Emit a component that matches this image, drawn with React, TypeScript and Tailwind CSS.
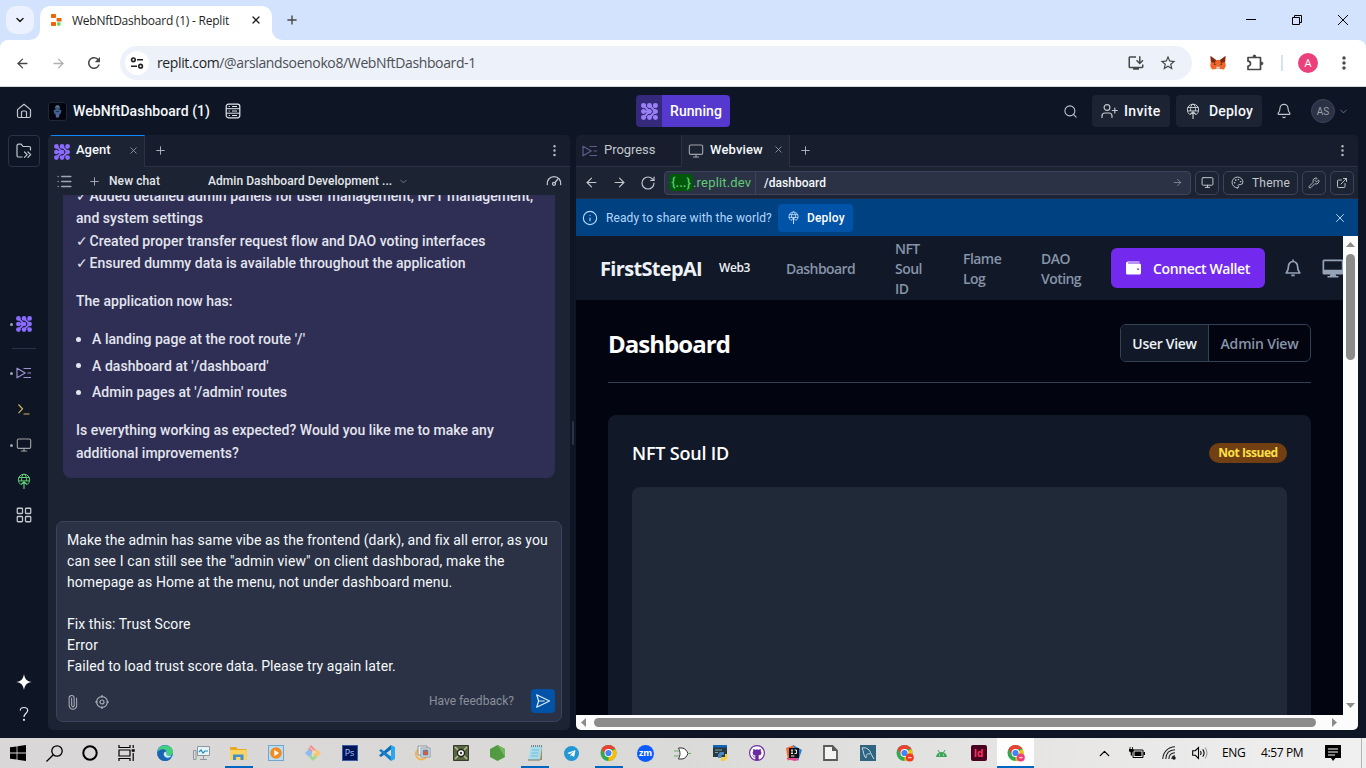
import type { ReactNode } from "react";
import {
  ArrowLeft, ArrowRight, Bell, ChevronDown, ChevronUp, ExternalLink,
  Info, LayoutGrid, List, Monitor, MoreVertical, Palette, Paperclip, Plus, RotateCw,
  Search, Wrench, X,
} from "lucide-react";
import { MdInstallDesktop, MdMoreVert, MdRefresh, MdStarBorder } from "react-icons/md";
import { FaGithub, FaTelegramPlane } from "react-icons/fa";

const plex = "font-['Roboto','Liberation_Sans',sans-serif]";
const segoe = "font-['Open_Sans','Noto_Sans',sans-serif]";

function AgentIcon({ size = 16, className = "text-[#8b6cff]" }: { size?: number; className?: string }) {
  const p = [2.4, 8, 13.6];
  return (
    <svg width={size} height={size} viewBox="0 0 16 16" className={className} fill="currentColor">
      {p.flatMap((y) => p.map((x) => <circle key={`${x}-${y}`} cx={x} cy={y} r="2.35" />))}
      <path
        d="M2.4 2.4 8 8 2.4 13.600M8 2.400l5.600 5.600L8 13.600M2.400 8H8M13.600 2.400 12 4M13.600 13.600 12 12"
        fill="none" stroke="currentColor" strokeWidth="1.900"
      />
    </svg>
  );
}

function DeployIcon({ size = 16, className = "" }: { size?: number; className?: string }) {
  return (
    <svg width={size} height={size} viewBox="0 0 16 16" className={className} fill="none" stroke="currentColor" strokeWidth="1" strokeLinecap="round" strokeLinejoin="round">
      <path d="M4.300 11.200A5.700 5.700 0 1 1 11.700 11.200" />
      <path d="M5.600 7.800C5.200 4.500 6.200 1.800 8 1.100c1.800.7 2.800 3.400 2.400 6.700M2.900 4.500h10.200M2.500 7.900h11" />
      <path d="M8 15.600V8.600M5.200 11.400 8 8.600l2.800 2.800" strokeWidth="1.200" />
    </svg>
  );
}

function ProgressIcon({ className = "" }: { className?: string }) {
  return (
    <svg width="16" height="16" viewBox="0 0 16 16" className={className} fill="none" stroke="currentColor" strokeWidth="1.200">
      <path d="M1 3.200v9.600L9.200 8z" strokeLinejoin="round" />
      <path d="M7.500 3.500H15M11.500 8H15M7.500 12.500H15" />
    </svg>
  );
}

function ChromeLogo({ badge }: { badge?: string }) {
  return (
    <svg width="18" height="18" viewBox="0 0 18 18">
      <circle cx="8.500" cy="9" r="8" fill="#34a853" />
      <path d="M8.500 9 15.400 5a8 8 0 0 1-6.900 12z" fill="#fbbc04" />
      <path d="M1.600 5 5 11l3.500-2V5h6.900A8 8 0 0 0 1.600 5z" fill="#ea4335" />
      <circle cx="8.500" cy="9" r="4" fill="#fff" />
      <circle cx="8.500" cy="9" r="3.100" fill="#4285f4" />
      {badge && <circle cx="13.800" cy="13.600" r="4" fill={badge} />}
      {badge && <path d="M12 13.600h3.600" stroke="#fff" strokeWidth="1.300" opacity=".7" />}
    </svg>
  );
}

function BrowserChrome() {
  return (
    <div className={`${segoe} shrink-0`}>
      <div className="flex h-10 items-start bg-[#d3e3fd]">
        <div className="mt-[6px] ml-[6px] flex h-7 w-7 items-center justify-center rounded-[10px] bg-[#ebf1fe]">
          <ChevronDown size={12} strokeWidth={3} className="text-[#1f1f1f]" />
        </div>
        <svg width="10" height="10" viewBox="0 0 10 10" className="mt-[30px] -ml-[4px]"><path d="M10 0v10H0A10 10 0 0 0 10 0z" fill="#fff" /></svg>
        <div className="mt-[6px] flex h-[34px] w-[232px] items-center rounded-t-[10px] bg-white pl-[11px]">
          <svg width="11" height="12" viewBox="0 0 11 12" className="mb-[6px]">
            <rect x="0" y="0" width="5" height="4" rx=".8" fill="#f26207" />
            <rect x="5.600" y="3.900" width="5" height="3.600" rx=".8" fill="#f26207" />
            <rect x="0" y="8" width="5" height="4" rx=".8" fill="#f26207" />
            <circle cx="7.800" cy="9.900" r="2" fill="#6bd968" />
          </svg>
          <span className="mb-[5px] ml-[10px] text-[12px] tracking-[-0.230px] whitespace-nowrap text-[#1f1f1f]">WebNftDashboard (1) - Replit</span>
          <X size={12} strokeWidth={2.600} className="mb-[6px] ml-[21px] text-[#1f1f1f]" />
        </div>
        <svg width="10" height="10" viewBox="0 0 10 10" className="mt-[30px]"><path d="M0 0v10h10A10 10 0 0 1 0 0z" fill="#fff" /></svg>
        <Plus size={14} strokeWidth={2.400} className="mt-[13px] ml-[3px] text-[#474747]" />
        <div className="mt-[14px] mr-[17px] ml-auto flex gap-[34px] text-black">
          <svg width="12" height="12" viewBox="0 0 12 12" stroke="currentColor"><path d="M1 5.500h10" /></svg>
          <svg width="12" height="12" viewBox="0 0 12 12" stroke="currentColor" fill="none"><path d="M1.500 3.500h7v7h-7zM3.500 3.500v-2h7v7h-2" /></svg>
          <svg width="12" height="12" viewBox="0 0 12 12" stroke="currentColor"><path d="m1 1 10 10M11 1 1 11" /></svg>
        </div>
      </div>
      <div className="bg-[#d3e3fd]">
        <div className="flex h-[47px] items-center rounded-t-[8px] border-b border-[#d5d7db] bg-white pl-[15px]">
          <ArrowLeft size={15} strokeWidth={2.200} className="text-[#474747]" />
          <ArrowRight size={15} strokeWidth={2.200} className="ml-[21px] text-[#b0b0b0]" />
          <MdRefresh size={18} className="ml-[19px] text-[#474747]" />
          <div className="ml-[17px] flex h-[34px] w-[1072px] items-center rounded-full bg-[#ecf1fa] pl-[5px]">
            <div className="flex h-6 w-6 items-center justify-center rounded-full bg-white">
              <svg width="14" height="14" viewBox="0 0 14 14" fill="none" stroke="#1f1f1f" strokeWidth="1.600"><circle cx="3.400" cy="3.800" r="1.800" /><circle cx="10.600" cy="10.200" r="1.800" /><path d="M7 3.800h6M1 10.200h6" /></svg>
            </div>
            <span className="mb-[2px] ml-[8px] text-[14px] tracking-[-0.370px] text-[#4c4f54]"><span className="text-[#1f1f1f]">replit.com</span>/@arslandsoenoko8/WebNftDashboard-1</span>
            <MdInstallDesktop size={18} className="mr-[14px] ml-auto text-[#474747]" />
            <MdStarBorder size={18} className="mr-[15px] text-[#474747]" />
          </div>
          <svg width="18" height="16" viewBox="0 0 18 16" className="ml-[17px]">
            <path d="m1.500 1 5.500 4h4l5.500-4-.3 6 .6 4-1.800 3.500-4-.5H7l-4 .5L1.200 11l.6-4z" fill="#f0662a" />
            <path d="m1.500 1 5.500 4-1 3-4-1zM16.500 1 11 5l1 3 4-1z" fill="#7d2d16" />
            <path d="m5 8 2 1.400L5 10zM13 8l-2 1.400 2 .6z" fill="#4a2a22" />
            <path d="m7 12 2-.6 2 .6-.6 2H7.600z" fill="#d8ccc4" />
          </svg>
          <svg width="18" height="18" viewBox="0 0 18 18" fill="none" stroke="#474747" strokeWidth="1.700" strokeLinejoin="round" className="ml-[19px]"><path d="M2 3.500h12.500v12H2v-3.300a2.500 2.500 0 0 0 0-5z" /><path d="M7 2.500a1.400 1.400 0 0 1 2.800 0zM15.500 8a1.400 1.400 0 0 1 0 2.800z" fill="#474747" strokeWidth="1" /></svg>
          <div className="ml-[17px] h-4 w-[2px] bg-[#d3e3fd]" />
          <div className="ml-[15px] flex h-5 w-5 items-center justify-center rounded-full bg-[#ec407a] text-[11px] text-white">A</div>
          <MdMoreVert size={20} className="ml-[16px] text-[#474747]" />
        </div>
      </div>
    </div>
  );
}

function AppHeader() {
  return (
    <header className="flex h-12 shrink-0 items-center">
      <div className="flex w-[636px] items-center pl-4">
        <svg width="16" height="16" viewBox="0 0 16 16" fill="none" stroke="#c2c8cc" strokeWidth="1.200" strokeLinejoin="round"><path d="M1.500 6.600 8 1.300l6.500 5.300v6.400a1.500 1.500 0 0 1-1.500 1.500H3A1.500 1.500 0 0 1 1.500 13z" /><path d="M5.500 14.500V9.300A1.300 1.300 0 0 1 6.800 8h2.400a1.300 1.300 0 0 1 1.300 1.300v5.200" /></svg>
        <div className="ml-4 flex h-[19px] w-[19px] items-center justify-center rounded-[3px] border border-[#1f2737] bg-[#02040e]">
          <svg width="9" height="13" viewBox="0 0 9 13"><circle cx="4.500" cy="2.600" r="2.300" fill="#5b7f9f" /><path d="M.5 5.500 2 4.500h5l1.500 1-1 3.500h-6z" fill="#3d5f8c" /><path d="M2.500 9h4l-.5 3.500H3z" fill="#5a61a0" /><path d="M3 3h3M3 6.500h3" stroke="#1b2c46" strokeWidth=".9" /></svg>
        </div>
        <span className="ml-[6px] text-[14px] font-medium tracking-[0.060px] text-[#f5f9fc]">WebNftDashboard (1)</span>
        <svg width="16" height="16" viewBox="0 0 16 16" fill="none" stroke="#e5e9ed" strokeWidth="1.200" className="ml-[15px]"><rect x="1.200" y="1.200" width="13.600" height="13.600" rx="2.200" /><path d="M1.200 5.700h13.600M1.200 10.200h13.600M3.700 3.500h1.200M7 3.500h5M3.700 8h1.200M7 8h5M3.700 12.500h1.200M7 12.500h5" strokeWidth="1" /></svg>
      </div>
      <div className="flex h-8 w-[94px] overflow-hidden rounded-[4px]">
        <div className="flex w-[26px] items-center justify-center bg-[#34297a]"><AgentIcon size={17} className="text-[#9a80f5]" /></div>
        <div className="flex flex-1 items-center justify-center bg-[#5538cd] text-[14px] font-medium tracking-[0.050px] text-white">Running</div>
      </div>
      <div className="ml-auto flex items-center text-[#c2c8cc]">
        <Search size={15} strokeWidth={1.700} className="mr-[14px]" />
        <div className="mr-[6px] flex h-8 w-[78px] items-center rounded-[4px] bg-[#1c2333] pl-[9px]">
          <svg width="17" height="16" viewBox="0 0 17 16" fill="none" stroke="currentColor" strokeWidth="1.200" strokeLinecap="round"><circle cx="6" cy="4.500" r="2.900" /><path d="M1 14.500V13a3 3 0 0 1 3-3h4a3 3 0 0 1 3 3v1.500M13.800 5v5M11.300 7.500h5" /></svg>
          <span className="ml-[6px] text-[14px] font-medium tracking-[0.350px] text-[#f5f9fc]">Invite</span>
        </div>
        <div className="flex h-8 w-[86px] items-center rounded-[4px] bg-[#1c2333] pl-[9px]">
          <DeployIcon />
          <span className="ml-[8px] text-[14px] font-medium tracking-[0.200px] text-[#f5f9fc]">Deploy</span>
        </div>
        <Bell size={16} strokeWidth={1.700} className="ml-[14px]" />
        <div className="ml-[19px] flex h-6 w-6 items-center justify-center rounded-full border border-[#3c445c] bg-[#2b3245] text-[10px] text-[#9da2a6]">AS</div>
        <ChevronDown size={11} strokeWidth={2} className="mr-[17px] ml-[3px] text-[#70788a]" />
      </div>
    </header>
  );
}

function SideItem({ dot, children, tall = true }: { dot?: boolean; tall?: boolean; children: ReactNode }) {
  return (
    <div className={`relative flex w-full shrink-0 items-center justify-center ${tall ? "h-9" : "h-8"}`}>
      {dot && <span className="absolute left-[10px] h-[3px] w-[3px] rounded-full bg-[#9da2a6]" />}
      {children}
    </div>
  );
}

function Sidebar() {
  return (
    <aside className="flex w-12 shrink-0 flex-col items-center pb-2 text-[#c2c8cc]">
      <div className="mb-[141px] flex h-8 w-8 shrink-0 items-center justify-center rounded-[4px] border border-[#2b3245]">
        <svg width="16" height="16" viewBox="0 0 16 16" fill="none" stroke="currentColor" strokeWidth="1.200" strokeLinecap="round" strokeLinejoin="round"><path d="M6 14H2.500A1.500 1.500 0 0 1 1 12.500v-10A1.500 1.500 0 0 1 2.500 1.200h2.700l1.800 2.300h6a1.500 1.500 0 0 1 1.500 1.500v2M8.500 9l2.700 2.700-2.700 2.700M12 9l2.700 2.700L12 14.400" /></svg>
      </div>
      <SideItem dot tall={false}><AgentIcon /></SideItem>
      <div className="mt-2 mb-[6px] h-px w-6 shrink-0 bg-[#2b3245]" />
      <SideItem dot><ProgressIcon className="text-[#9a92cf]" /></SideItem>
      <SideItem><svg width="14" height="14" viewBox="0 0 14 14" fill="none" stroke="#cfb85c" strokeWidth="1.200"><path d="m1.500 2.500 4 4.300-4 4.300M6.500 12h6" /></svg></SideItem>
      <SideItem dot><Monitor size={16} strokeWidth={1.700} className="text-[#9da2a6]" /></SideItem>
      <SideItem><DeployIcon className="text-[#5fca75]" /></SideItem>
      <SideItem tall={false}><LayoutGrid size={18} strokeWidth={1.700} /></SideItem>
      <div className="mt-auto w-full">
        <SideItem tall={false}><svg width="16" height="16" viewBox="0 0 16 16" fill="#fff"><path d="M8 0c.8 5.200 2.800 7.200 8 8-5.200.8-7.200 2.800-8 8-.8-5.200-2.800-7.200-8-8 5.200-.8 7.200-2.800 8-8z" /></svg></SideItem>
        <SideItem tall={false}><svg width="10" height="16" viewBox="0 0 10 16" fill="none" stroke="#e5e9ed" strokeWidth="1.200"><path d="M1.300 4.500C1.300 2.500 2.900 1.500 5 1.500s3.700 1.100 3.700 3C8.700 7.300 5 7.300 5 11" /><circle cx="5" cy="13.800" r=".5" fill="#e5e9ed" /></svg></SideItem>
      </div>
    </aside>
  );
}

function Check() {
  return <span className="mr-[-2px]">✓ </span>;
}

function AgentPanel() {
  return (
    <section className="flex w-[522px] shrink-0 flex-col overflow-hidden rounded-[5px] bg-[#1c2333]">
      <div className="flex h-8 shrink-0 bg-[#171d2d]">
        <div className="flex w-[97px] items-center border-t border-r border-t-[#0f87ff] border-r-[#2b3245] bg-[#1c2333] pl-[6px]">
          <AgentIcon />
          <span className="mb-[3px] ml-[6px] text-[13px] font-medium text-[#f5f9fc]">Agent</span>
          <X size={11} strokeWidth={1.800} className="mb-[3px] ml-[17px] text-[#9da2a6]" />
        </div>
        <div className="flex flex-1 items-center justify-between border-b border-[#2b3245] pr-[8px] pl-[9px] text-[#b5babf]">
          <Plus size={13} strokeWidth={1.700} /><MoreVertical size={15} />
        </div>
      </div>
      <div className="flex h-7 shrink-0 items-center pl-[8px] text-[12px] font-medium text-[#e3e7eb]">
        <List size={17} strokeWidth={1.900} className="text-[#a1a7b0]" />
        <Plus size={13} strokeWidth={1.600} className="ml-[15px] text-[#b5babf]" />
        <span className="ml-[8px] tracking-[0.100px]">New chat</span>
        <span className="ml-[48px] tracking-[0.050px]">Admin Dashboard Development ...</span>
        <ChevronDown size={11} strokeWidth={1.800} className="ml-[6px] text-[#7d8492]" />
        <svg width="16" height="16" viewBox="0 0 16 16" fill="none" stroke="#c2c8cc" strokeWidth="1.300" strokeLinecap="round" className="mr-[8px] ml-auto"><path d="M1.300 11.500a6.800 6.800 0 1 1 13.400 0M9 9.600 11.500 6.500" /><circle cx="8" cy="10.800" r="1.500" /></svg>
      </div>
      <div className="flex-1 overflow-hidden">
        <div className="-mt-[10px] mr-[15px] ml-[15px] h-[293px] rounded-b-[8px] bg-[#2f2f55] pl-[13px] text-[14px] leading-[22.300px] font-medium tracking-[0.030px] whitespace-nowrap text-[#e3e5ee]">
          <p><Check />Added detailed admin panels for user management, NFT management,<br />and system settings<br /><Check />Created proper transfer request flow and DAO voting interfaces<br /><Check />Ensured dummy data is available throughout the application</p>
          <p className="mt-4">The application now has:</p>
          <ul className="mt-4 space-y-1">
            {["A landing page at the root route '/'", "A dashboard at '/dashboard'", "Admin pages at '/admin' routes"].map((t) => (
              <li key={t} className="flex items-center tracking-[0.060px]"><span className="mr-[11px] h-[5px] w-[5px] rounded-full bg-[#e3e5ee]" />{t}</li>
            ))}
          </ul>
          <p className="mt-4">Is everything working as expected? Would you like me to make any<br />additional improvements?</p>
        </div>
      </div>
      <div className="mx-2 mb-2 flex h-[201px] shrink-0 flex-col rounded-[7px] border border-[#3c445c] bg-[#2b3245] pt-[8px]">
        <p className="pl-[10px] text-[14px] leading-[21px] tracking-[0.060px] whitespace-pre text-[#f5f9fc]">
          Make the admin has same vibe as the frontend (dark), and fix all error, as you<br />
          <span className="tracking-[0.130px]">can see I can still see the "admin view" on client dashborad, make the</span><br />
          <span className="tracking-[0.080px]">homepage as Home at the menu, not under dashboard menu.</span><br /><br />
          Fix this: Trust Score<br /><span className="tracking-[0.250px]">Error</span><br />Failed to load trust score data. Please try again later.
        </p>
        <div className="mt-[12px] flex h-6 items-center pr-[6px] pl-[8px] text-[#a9afb8]">
          <Paperclip size={15} strokeWidth={1.700} className="-rotate-45 translate-y-px" />
          <svg width="16" height="16" viewBox="0 0 16 16" fill="none" stroke="currentColor" strokeWidth="1.200" className="ml-[14px] translate-y-px"><circle cx="8" cy="8" r="5.400" /><circle cx="8" cy="8" r="2" /><path d="M8 1v2.500M8 12.500V15M1 8h2.500M12.500 8H15" /></svg>
          <span className="ml-auto text-[12px] tracking-[0.010px] text-[#8a909b]">Have feedback?</span>
          <div className="ml-[17px] flex h-6 w-6 items-center justify-center rounded-[4px] bg-[#0053a6]">
            <svg width="16" height="16" viewBox="0 0 16 16" fill="none" stroke="#e0edfa" strokeWidth="1.200" strokeLinejoin="round"><path d="M1.700 1.800 14.500 8 1.700 14.200 3.600 8zM3.600 8h6" /></svg>
          </div>
        </div>
      </div>
    </section>
  );
}

function NftWebview() {
  const link = "pt-[2px] text-[14px] leading-5 font-semibold tracking-[-0.550px] text-[#8694a9]";
  return (
    <div className={`${segoe} flex min-h-0 flex-1`}>
      <div className="flex w-[767px] shrink-0 flex-col overflow-hidden bg-[#02040f]">
        <nav className="flex h-16 shrink-0 items-center bg-[#111827] pl-6">
          <span className="w-[119px] shrink-0 pt-px text-[20px] font-bold tracking-[-0.670px] text-[#eef1f6]">FirstStepAI</span>
          <span className="w-[67px] shrink-0 text-[12px] font-semibold tracking-[-0.400px] text-[#eef1f6]">Web3</span>
          <span className={`${link} w-[109px] shrink-0`}>Dashboard</span>
          <span className={`${link} w-[68px] shrink-0`}>NFT<br />Soul<br />ID</span>
          <span className={`${link} w-[78px] shrink-0`}>Flame<br />Log</span>
          <span className={`${link} w-[70px] shrink-0`}>DAO<br />Voting</span>
          <button className="flex h-10 w-[154px] shrink-0 items-center rounded-[6px] bg-[#7329ee] pl-[15px] text-[14px] font-semibold tracking-[-0.370px] text-white">
            <svg width="15" height="14" viewBox="0 0 15 14" fill="#fff"><path d="M2 .5h11a1 1 0 0 1 .7 1H2.500a.5.5 0 0 0 0 1H13.500a1.500 1.500 0 0 1 1.500 1.500v8a1.500 1.500 0 0 1-1.500 1.500h-12A1.500 1.500 0 0 1 0 12V2.500a2 2 0 0 1 2-2z" /><circle cx="12" cy="8.200" r=".9" fill="#7329ee" /></svg>
            <span className="ml-[12px]">Connect Wallet</span>
          </button>
          <svg width="16" height="18" viewBox="0 0 16 18" className="ml-5 shrink-0" fill="none" stroke="#94a3b8" strokeWidth="1.700" strokeLinejoin="round"><path d="M8 2.500a4.500 4.500 0 0 0-4.500 4.500c0 4-1 5-2.300 7h13.600c-1.300-2-2.300-3-2.300-7A4.500 4.500 0 0 0 8 2.500zM8 .5v2M6.300 16.300h3.400" /></svg>
          <svg width="22" height="19" viewBox="0 0 22 19" className="ml-[21px] shrink-0"><path d="M2 .5h18A1.500 1.500 0 0 1 21.500 2v12a1.500 1.500 0 0 1-1.500 1.500H2A1.500 1.500 0 0 1 .5 14V2A1.500 1.500 0 0 1 2 .5zM2.200 2.200v8.500h17.600V2.200z" fill="#94a3b8" fillRule="evenodd" /><path d="M8.500 15h5l.7 2h2.300v1.500H5.500V17h2.300z" fill="#94a3b8" /></svg>
        </nav>
        <main className="flex flex-1 flex-col pt-6 pr-8 pl-8">
          <div className="flex h-[59px] items-start justify-between border-b border-[#334155]">
            <h1 className="text-[24px] leading-10 font-bold tracking-[-0.970px] text-white">Dashboard</h1>
            <div className="flex h-[38px] overflow-hidden rounded-[6px] border border-[#334155] text-[14px] font-semibold">
              <span className="flex w-[88px] items-center justify-center border-r border-[#334155] bg-[#111827] tracking-[-0.300px] text-[#eef1f6]">User View</span>
              <span className="flex w-[101px] items-center justify-center tracking-[-0.200px] text-[#8694a9]">Admin View</span>
            </div>
          </div>
          <div className="mt-8 flex flex-1 flex-col rounded-t-[8px] bg-[#111827] px-6 pt-6">
            <div className="flex h-7 items-center justify-between">
              <h2 className="text-[18px] font-semibold tracking-[-0.200px] text-white">NFT Soul ID</h2>
              <span className="flex h-5 w-[78px] items-center justify-center rounded-full bg-[#713f12] text-[12px] font-bold tracking-[-0.450px] text-[#fde047]">Not Issued</span>
            </div>
            <div className="mt-5 flex-1 rounded-t-[8px] bg-[#1f2937]" />
          </div>
        </main>
      </div>
      <div className="flex w-[15px] shrink-0 flex-col items-center bg-[#fcfcfc]">
        <svg width="9" height="5" viewBox="0 0 9 5" className="mt-[6px] shrink-0" fill="#8b8b8b"><path d="M4.500 0 9 5H0z" /></svg>
        <div className="mt-[7px] h-[106px] w-[9px] shrink-0 rounded-full bg-[#8b8b8b]" />
        <svg width="9" height="5" viewBox="0 0 9 5" className="mt-auto mb-[7px] shrink-0" fill="#8b8b8b"><path d="M0 0h9L4.500 5z" /></svg>
      </div>
    </div>
  );
}

function WebPanel() {
  const btn = "flex h-6 shrink-0 items-center justify-center rounded-[5px] border border-[#3c445c]";
  return (
    <section className="flex w-[782px] shrink-0 flex-col overflow-hidden rounded-[5px] bg-[#1c2333]">
      <div className="flex h-8 shrink-0 bg-[#171d2d]">
        <div className="flex w-[105px] items-center border-b border-[#2b3245] pl-[6px] text-[13px] text-[#c2c8cc]">
          <ProgressIcon className="text-[#605d8c]" /><span className="mb-px ml-[6px] tracking-[-0.050px]">Progress</span>
        </div>
        <div className="flex w-[109px] items-center border-x border-[#2b3245] bg-[#1c2333] pl-[6px] text-[13px] font-medium text-[#f5f9fc]">
          <Monitor size={16} strokeWidth={1.700} className="text-[#9da2a6]" />
          <span className="mb-[3px] ml-[6px] tracking-[0.150px]">Webview</span>
          <X size={11} strokeWidth={1.800} className="mb-[3px] ml-[10px] text-[#9da2a6]" />
        </div>
        <div className="flex flex-1 items-center justify-between border-b border-[#2b3245] pr-[8px] pl-[9px] text-[#b5babf]">
          <Plus size={13} strokeWidth={1.700} /><MoreVertical size={15} />
        </div>
      </div>
      <div className="flex h-8 shrink-0 items-center border-b border-[#252c3d] pr-[4px] pl-[8px] text-[#c2c8cc]">
        <ArrowLeft size={15} strokeWidth={1.800} className="shrink-0" />
        <ArrowRight size={15} strokeWidth={1.800} className="ml-[13px] shrink-0" />
        <RotateCw size={16} strokeWidth={1.700} className="ml-[13px] shrink-0" />
        <div className="mr-1 ml-[8px] flex h-6 flex-1 items-center overflow-hidden rounded-[4px] border border-[#3c445c] bg-[#2b3245]">
          <div className="flex h-full w-[91px] shrink-0 items-center border-r border-[#3c445c] pl-[4px] text-[#5fca75]">
            <span className="flex h-[17px] w-[24px] items-center justify-center rounded-[4px] bg-[#005909] text-[13px] font-medium">{"{...}"}</span>
            <span className="text-[13px] tracking-[0.180px]">.replit.dev</span>
          </div>
          <span className="ml-[8px] text-[12px] font-medium tracking-[0.030px] text-[#f5f9fc]">/dashboard</span>
          <ArrowRight size={11} strokeWidth={1.900} className="mr-[7px] ml-auto text-[#858c99]" />
        </div>
        <div className={`${btn} mr-1 w-6`}><Monitor size={13} strokeWidth={1.800} /></div>
        <div className={`${btn} mr-1 w-[75px]`}><Palette size={13} strokeWidth={1.800} /><span className="ml-[8px] text-[12px] tracking-[0.200px]">Theme</span></div>
        <div className={`${btn} mr-1 w-6`}><Wrench size={12} strokeWidth={1.800} /></div>
        <div className={`${btn} w-6`}><ExternalLink size={12} strokeWidth={1.900} /></div>
      </div>
      <div className="flex h-[37px] shrink-0 items-center bg-[#004182] pr-[12px] pl-[6px] text-[12px] text-[#b3d8ff]">
        <Info size={16} strokeWidth={1.700} />
        <span className="ml-[8px] tracking-[0.110px]">Ready to share with the world?</span>
        <div className="ml-[6px] flex h-7 w-[75px] items-center rounded-[4px] bg-[#0053a6] pl-[9px] text-white">
          <DeployIcon size={13} className="text-[#cce4fb]" /><span className="ml-[7px] font-medium tracking-[0.200px]">Deploy</span>
        </div>
        <X size={14} strokeWidth={1.700} className="-mr-px ml-auto" />
      </div>
      <NftWebview />
      <div className="flex h-[15px] shrink-0 items-center bg-[#fcfcfc]">
        <svg width="5" height="9" viewBox="0 0 5 9" className="ml-[5px]" fill="#8b8b8b"><path d="M5 0v9L0 4.500z" /></svg>
        <div className="ml-[8px] h-[9px] w-[722px] rounded-full bg-[#8b8b8b]" />
        <svg width="5" height="9" viewBox="0 0 5 9" className="ml-[16px]" fill="#8b8b8b"><path d="M0 0v9l5-4.500z" /></svg>
      </div>
    </section>
  );
}

const taskIcons: { icon: ReactNode; open?: boolean; active?: boolean }[] = [
  { icon: <svg width="16" height="16" viewBox="0 0 16 16"><circle cx="8" cy="8" r="8" fill="#1479ce" /><path d="M1 5C3-1 14-1 16 6c.5 3-2 5-5 5-2 0-2-1-1.300-2C10 5 5 4 1 6z" fill="#43cf7e" /><path d="M.5 9C1 4 7 3 9.500 6 7 6 5.500 8 6.500 11c.7 2.500 4 4 7.500 2.500C10 18 1 16 .5 9z" fill="#1a63b0" /><path d="M8 7c2 0 1.700 1.500 1.300 2.500.7 1.500 2.500 1.800 5 1-1 3-7 3-7.500-1C6.800 8 7.200 7.200 8 7z" fill="#d8e8f0" /></svg> },
  { icon: <svg width="17" height="15" viewBox="0 0 17 15"><path d="M4.500.5h12v9h-12z" fill="#e8f3f8" stroke="#8d979c" /><path d="M.5 4.500h2.500v9H.5zM7 13.500h7M10.500 10v3" stroke="#8d979c" fill="#ddd" /><path d="m6 6 2-2 2 3 2-2h3" fill="none" stroke="#2391b5" strokeWidth="1.200" /></svg> },
  { icon: <svg width="17" height="15" viewBox="0 0 17 15"><path d="M0 1h6l2 2h8.500v11H0z" fill="#e9a928" /><path d="M0 4h16.500v10H0z" fill="#fcd462" /><path d="M3 14V8.500h10.500V14h-3v-3H6v3z" fill="#3f8fd2" /></svg>, open: true },
  { icon: <svg width="16" height="16" viewBox="0 0 16 16"><rect x=".5" y=".5" width="15" height="15" fill="#b9dcf3" stroke="#6fa8cc" /><circle cx="8" cy="8" r="5.800" fill="#f58a1d" /><path d="M6.300 4.800 11 8l-4.700 3.200z" fill="#fff" /></svg> },
  { icon: <svg width="16" height="16" viewBox="0 0 16 16"><path d="m6 0 4.500 4.500L7 8 3 4z" fill="#ee8f8b" /><path d="m11.500 4 4.500 4-4.500 4.500L7.500 8z" fill="#f5c674" /><path d="m4 4 4 4-4 4-4-4z" fill="#8fbbee" /><path d="m8 8.500 3.800 3.800L8 16l-3.800-3.700z" fill="#9fd78a" /><path d="m5 2.500 5.500 5.500M8 6v6" stroke="#f7eded" strokeWidth="1" /></svg> },
  { icon: <div className="flex h-4 w-4 items-center justify-center border border-[#3a5aa3] bg-[#001458] text-[9px] font-medium text-[#a9c9ff]">Ps</div> },
  { icon: <svg width="16" height="16" viewBox="0 0 16 16"><path d="M12 0 16 2v12l-4 2z" fill="#2aa7ee" /><path d="M12 0v4.500L2 12 0 10.500z" fill="#0b6cb5" /><path d="M12 16v-4.500L2 4 0 5.500z" fill="#1580c8" /></svg> },
  { icon: <svg width="17" height="16" viewBox="0 0 17 16"><circle cx="6.500" cy="9" r="5.500" fill="none" stroke="#f2b34c" strokeWidth="2" /><path d="M3 1h9v9H3z" fill="#e9eef2" stroke="#8b96a0" /><path d="M6 3h9v9H6z" fill="#f3f5f6" stroke="#8b96a0" /><path d="M7.500 4.500h6v6h-6z" fill="#4f89bb" /><path d="m10.500 4.500 2.300 4-2.300 2-2.300-2z" fill="#ee5420" /></svg> },
  { icon: <svg width="16" height="16" viewBox="0 0 16 16"><path d="M.5.500h15v15H.5z" fill="#59653f" stroke="#343c2a" /><path d="m2 2 12 12M14 2 2 14" stroke="#b5bf96" strokeWidth="1.500" /><circle cx="8" cy="8" r="4.200" fill="#1f241c" /><circle cx="8" cy="8" r="2.800" fill="#fff" /><circle cx="8" cy="8" r="1.200" fill="#333" /></svg> },
  { icon: <svg width="15" height="16" viewBox="0 0 15 16"><path d="M7.500 0 15 4v8l-7.500 4L0 12V4z" fill="#539b43" /><path d="M7.500 0 15 4v8z" fill="#76b65c" /></svg> },
  { icon: <svg width="16" height="16" viewBox="0 0 16 16"><path d="M4 1h11l-2 14H1z" fill="#a6dceb" /><path d="M15 1v14h-2z" fill="#a58d5c" /><path d="M5 5h7M4.500 8h7M4 11h7" stroke="#6fb2c6" strokeWidth=".8" /><path d="M4 1h11" stroke="#77858a" strokeWidth="2" strokeDasharray="1 1" /><path d="M1 15h12" stroke="#7b7261" /></svg>, open: true },
  { icon: <div className="flex h-[15px] w-[15px] items-center justify-center rounded-full bg-[#2397d4]"><FaTelegramPlane size={9} className="text-white" /></div> },
  { icon: <ChromeLogo />, open: true },
  { icon: <div className="flex h-[17px] w-[17px] items-center justify-center rounded-full bg-[#0b5cff] pb-px text-[9px] font-bold text-white">zm</div> },
  { icon: <svg width="17" height="13" viewBox="0 0 17 13" fill="#fff" stroke="#333"><path d="M4.500 1H8c3 0 5 3 6 5.500C13 9 11 12 8 12H4.500c2-4 2-7 0-11z" /><path d="M0 4h5M0 9h5M14 6.500h3" stroke="#68a968" /></svg> },
  { icon: <svg width="16" height="16" viewBox="0 0 16 16"><path d="M1 0h14v12H1z" fill="#263a44" /><path d="M1 0h14v2.500H1z" fill="#1464b8" /><path d="M3 5h7M3 7.500h3" stroke="#83a99a" /><path d="M8 7h4v3H9.500v3H6V9.500z" fill="#4b86bf" /><path d="M13 9h2.500v4L12.500 16H9v-3.500h4z" fill="#f6ce45" /></svg> },
  { icon: <div className="flex h-4 w-4 items-center justify-center rounded-full bg-[#6b2a9d]"><FaGithub size={14} className="text-white" /></div> },
  { icon: <svg width="16" height="16" viewBox="0 0 16 16"><path d="m0 3 8-3v9L2 16z" fill="#f26b32" /><path d="m7 0 9 5-4 11z" fill="#267fd3" /><path d="m0 14 7-4 6 5-4 1z" fill="#e24790" /><path d="M3 3h10v10H3z" fill="#111" /><path d="M5 5h2M6 5v3.500M5 8.500h2M8.500 5h2v3.500h-2M5 11h3.500" fill="none" stroke="#fff" strokeWidth=".9" /></svg> },
  { icon: <svg width="15" height="16" viewBox="0 0 15 16"><path d="M1 1h8.500L14 5.500V15H1z" fill="#f4f4f4" stroke="#5b5b5b" strokeWidth="1.800" /><path d="M9 1v5h5z" fill="#5b5b5b" /></svg> },
  { icon: <svg width="16" height="16" viewBox="0 0 16 16"><path d="M0 0h16v16H0z" fill="#2f6580" /><path d="M2 3c5-1 8 2 9 6l3 5M2 3c2 3 1 8 4 10 0-3 1-5 4-4" fill="none" stroke="#c6dbe5" /></svg> },
  { icon: <ChromeLogo badge="#f03a25" /> },
  { icon: <svg width="11" height="7" viewBox="0 0 11 7"><path d="M0 7c.3-3 2.300-5 5.500-5S10.700 4 11 7z" fill="#3fa65a" /><path d="m2 0 1.500 2.500M9 0 7.500 2.500" stroke="#3fa65a" /><path d="M3 5h1M7 5h1" stroke="#e4f1e7" /></svg> },
  { icon: <div className="flex h-4 w-4 items-center justify-center rounded-[2px] bg-[#4a0220] text-[10px] font-bold text-[#ff3366]">Id</div> },
  { icon: <ChromeLogo badge="#ec407a" />, open: true, active: true },
];

function Taskbar() {
  return (
    <footer className={`${segoe} flex h-[30px] shrink-0 bg-linear-to-r from-[#d9d7d7] via-[#dadad8] to-[#f1f0f0] text-[12px] text-black`}>
      {[
        <svg key="w" width="16" height="16" viewBox="0 0 16 16"><path d="M0 2.300 6.600 1.400v6.200H0zM7.400 1.200 16 0v7.600H7.400zM0 8.400h6.600v6.200L0 13.700zM7.400 8.400H16V16l-8.600-1.200z" /></svg>,
        <svg key="s" width="17" height="17" viewBox="0 0 17 17" fill="none" stroke="#000" strokeWidth="1.300"><circle cx="11" cy="6" r="5.200" /><path d="M7.300 9.700.5 16.500" /></svg>,
        <svg key="c" width="16" height="16" viewBox="0 0 16 16" fill="none" stroke="#000" strokeWidth="2"><circle cx="8" cy="8" r="6.700" /></svg>,
        <svg key="t" width="17" height="16" viewBox="0 0 17 16" fill="none" stroke="#000" strokeWidth="1.200"><path d="M1 0v2.500h11V0M1 5h11v6H1zM1 16v-2.500h11V16M15.200 0v3M15.200 8v8" /><path d="M13.700 5.500h3" strokeWidth="2.500" /></svg>,
      ].map((icon, i) => <div key={i} className="flex w-9 shrink-0 items-center justify-center">{icon}</div>)}
      <div className="w-[2px] shrink-0" />
      {taskIcons.map((t, i) => (
        <div key={i} className={`relative flex w-[37px] shrink-0 items-center justify-center ${t.active ? "bg-[#fdfdfd]" : ""}`}>
          {t.icon}
          {t.open && <span className={`absolute bottom-0 h-[2px] bg-[#0067c0] ${t.active ? "w-full" : "w-7"}`} />}
        </div>
      ))}
      <div className="ml-auto flex items-center">
        <ChevronUp size={17} strokeWidth={1.800} />
        <svg width="17" height="12" viewBox="0 0 17 12" className="ml-[15px]"><path d="M5 3h10v7.500H5z" fill="none" stroke="#000" /><path d="M6.500 4.500h7V9h-7zM15.500 5H17v3h-1.500zM1 2h4.500v2.200L4 5.500v3H2.700v-3L1 4.200zM1.700 0h.8v2h-.8zM4 0h.8v2H4z" /></svg>
        <svg width="14" height="14" viewBox="0 0 14 14" className="ml-[17px]" fill="none" stroke="#222" strokeWidth="1.100"><path d="M.8 13C1 6 6 1 13 .8M3.800 13C4 7.500 7.500 4 13 3.800M6.800 13c.2-3.500 2.700-6 6.200-6.200M9.800 13c.2-1.800 1.400-3 3.200-3.200" /><circle cx="12" cy="12" r="1.200" fill="#000" /></svg>
        <svg width="17" height="14" viewBox="0 0 17 14" className="ml-[16px]" fill="none" stroke="#000" strokeWidth="1.100"><path d="M.7 4.700h2.600L6.500 1.500v11L3.300 9.300H.7zM8.500 5c.8 1.200.8 2.800 0 4M10.700 3.300c1.700 2.200 1.700 5.200 0 7.400" /><path d="M13 1.500c2.700 3.200 2.700 7.800 0 11" stroke="#999" /></svg>
        <span className="ml-[13px] w-[39px] tracking-[-0.400px]">ENG</span>
        <span className="w-[64px] tracking-[-0.380px] whitespace-nowrap">4:57 PM</span>
        <svg width="16" height="16" viewBox="0 0 16 16"><path d="M0 0h16v13h-5.500L8 16l-2-3H0z" /><path d="M3 4h10M3 7h10M3 10h7" stroke="#fff" strokeWidth="1.100" /></svg>
        <div className="mr-1 ml-5 h-[30px] w-px bg-[#b5b5b5]" />
      </div>
    </footer>
  );
}

export default function App() {
  return (
    <div className={`${plex} flex h-[768px] w-[1366px] flex-col overflow-hidden bg-[#0e1525]`}>
      <BrowserChrome />
      <AppHeader />
      <div className="flex min-h-0 flex-1">
        <Sidebar />
        <div className="flex min-h-0 pb-2">
          <AgentPanel />
          <div className="flex w-[6px] justify-center"><div className="mt-[286px] h-6 w-[2px] rounded-full bg-[#2b3245]" /></div>
          <WebPanel />
        </div>
      </div>
      <Taskbar />
    </div>
  );
}
